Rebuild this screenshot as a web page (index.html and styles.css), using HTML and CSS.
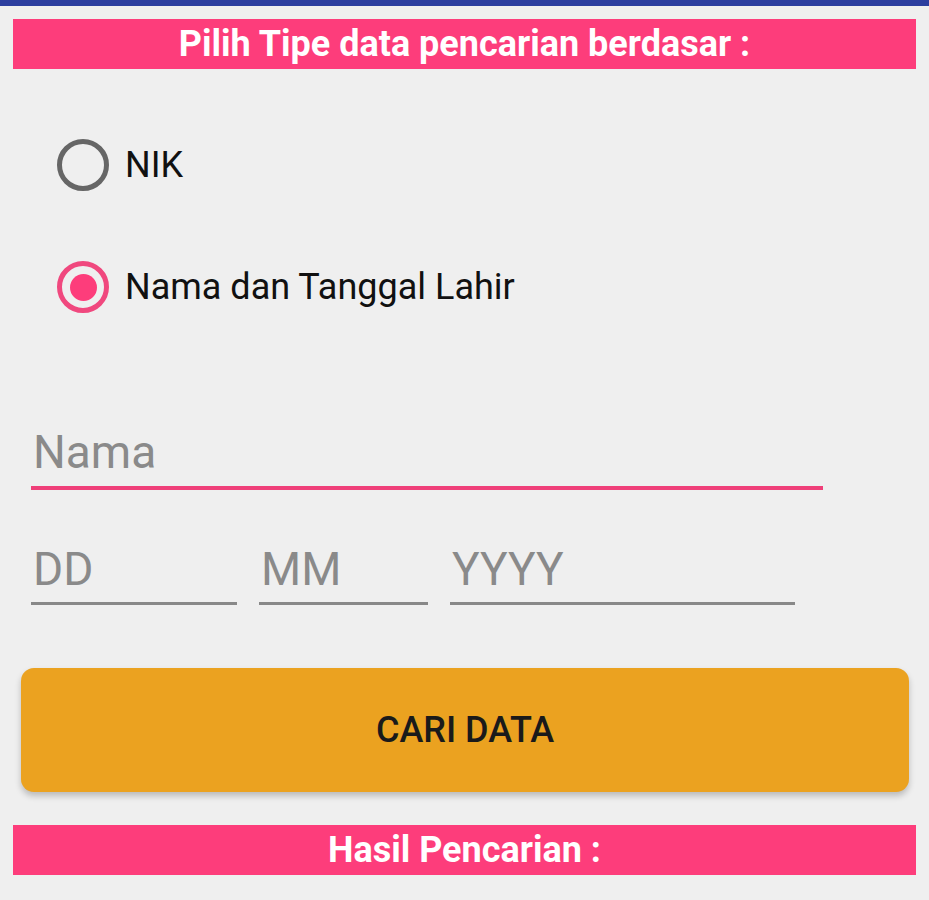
FILE: index.html
```html
<!DOCTYPE html>
<html lang="en">

<head>
  <meta charset="UTF-8" />
  <meta name="viewport" content="width=device-width, initial-scale=1.0" />
  <title>Pencarian Data</title>
  <link rel="stylesheet" href="styles.css">
</head>

<body>
  <div class="topbar"></div>

  <div class="screen">
    <div class="title-bar">Pilih Tipe data pencarian berdasar :</div>

    <div class="radio-group">
      <label class="radio">
        <span class="circle"></span>
        <span class="radio-text">NIK</span>
      </label>
      <label class="radio checked">
        <span class="circle"><span class="dot"></span></span>
        <span class="radio-text">Nama dan Tanggal Lahir</span>
      </label>
    </div>

    <div class="field field-name">
      <span class="placeholder">Nama</span>
    </div>

    <div class="date-row">
      <div class="field field-dd"><span class="placeholder">DD</span></div>
      <div class="field field-mm"><span class="placeholder">MM</span></div>
      <div class="field field-yy"><span class="placeholder">YYYY</span></div>
    </div>

    <button class="search-btn">CARI DATA</button>

    <div class="title-bar result-bar">Hasil Pencarian :</div>
  </div>
</body>

</html>
```

FILE: styles.css
```css
* {
  box-sizing: border-box;
}

body {
  margin: 0;
  background: #efefef;
  font-family: Roboto, "Noto Sans", sans-serif;
  height: 900px;
  overflow: hidden;
}

.topbar {
  height: 6px;
  background: #2c3e9f;
}

.screen {
  padding: 13px 13px 0 13px;
}

.title-bar {
  background: #fd3d7b;
  height: 50px;
  display: flex;
  justify-content: center;
  align-items: center;
  color: #fff;
  font-weight: 700;
  font-size: 36px;
  white-space: nowrap;
}

.radio-group {
  display: flex;
  flex-direction: column;
  gap: 70px;
  padding: 70px 0 0 44px;
}

.radio {
  display: flex;
  align-items: center;
  gap: 16px;
  height: 52px;
}

.circle {
  width: 52px;
  height: 52px;
  border: 5px solid #666;
  border-radius: 50%;
  display: flex;
  justify-content: center;
  align-items: center;
}

.radio.checked .circle {
  border-color: #f0487e;
}

.dot {
  width: 27px;
  height: 27px;
  border-radius: 50%;
  background: #fd3d7b;
}

.radio-text {
  font-size: 36px;
  color: #111;
}

.field {
  border-bottom: 3px solid #888;
  padding: 0 0 10px 2px;
}

.placeholder {
  display: block;
  color: #8a8a8a;
  font-size: 46px;
  line-height: 1;
}

.field-name {
  margin: 116px 0 0 18px;
  width: 792px;
  border-bottom: 4px solid #ef3f79;
  padding-bottom: 11px;
}

.date-row {
  display: flex;
  gap: 22px;
  margin: 56px 0 0 18px;
}

.field-dd {
  width: 206px;
}

.field-mm {
  width: 169px;
}

.field-yy {
  width: 345px;
}

.search-btn {
  display: block;
  width: 888px;
  height: 124px;
  margin: 63px 0 0 8px;
  border: none;
  border-radius: 13px;
  background: #eba220;
  box-shadow: 0 4px 6px rgba(0, 0, 0, 0.22);
  font-family: Roboto, "Noto Sans", sans-serif;
  font-weight: 500;
  font-size: 36px;
  color: #1a1a1a;
  padding: 0;
}

.result-bar {
  margin-top: 33px;
}
```
